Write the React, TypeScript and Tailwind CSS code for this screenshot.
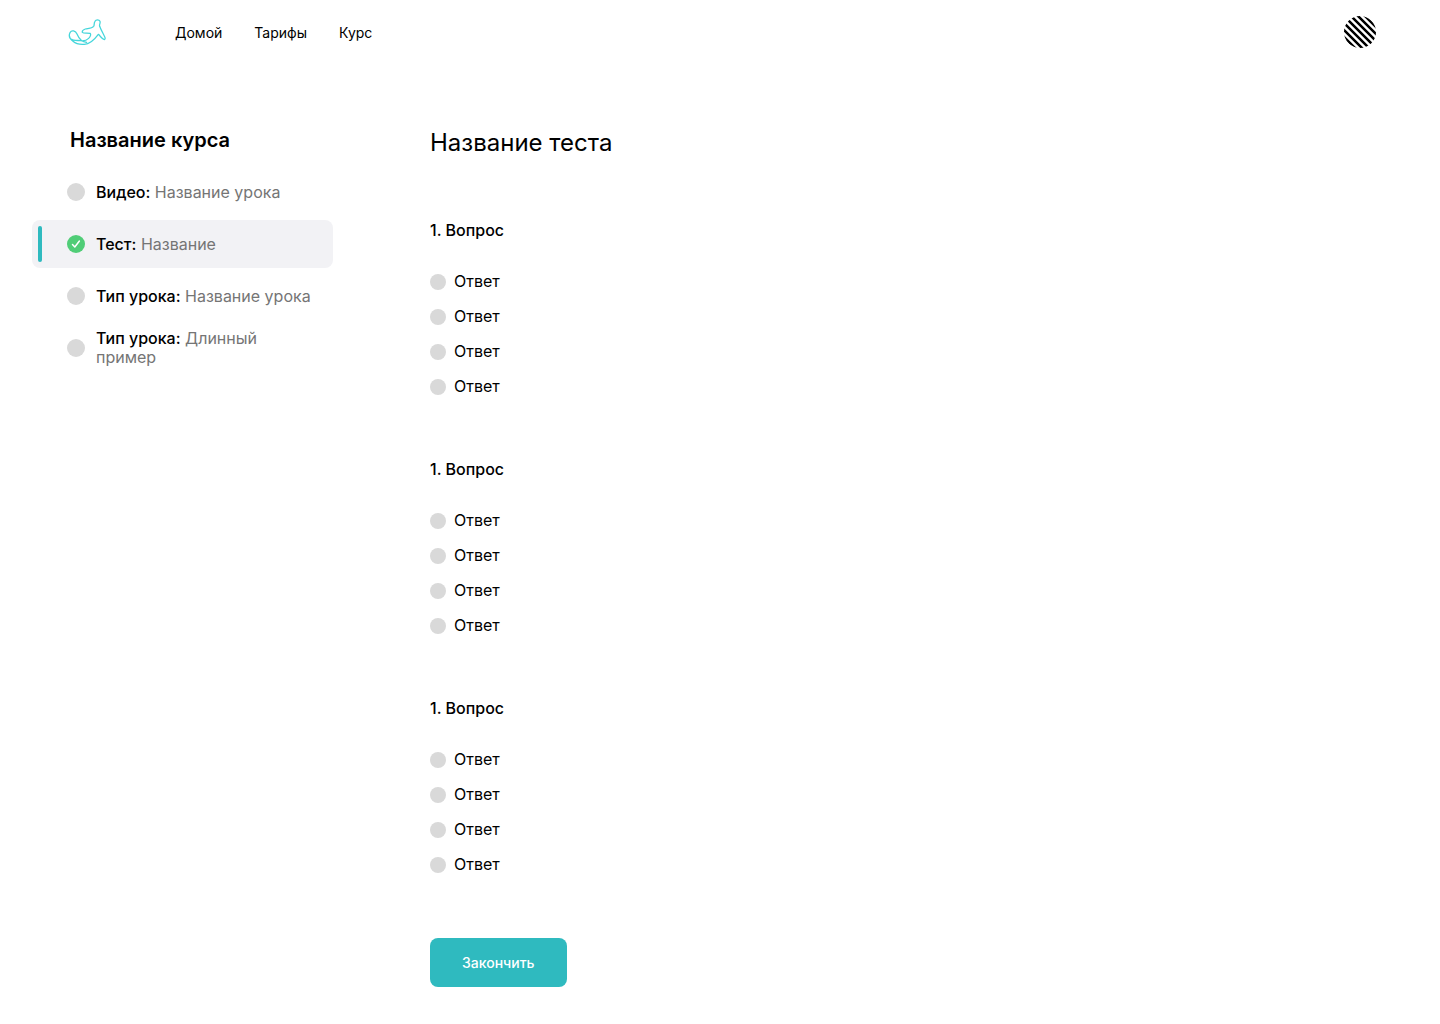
import React from "react";

type Lesson = { kind: string; title: string; active?: boolean };

const lessons: Lesson[] = [
  { kind: "Видео:", title: "Название урока" },
  { kind: "Тест:", title: "Название", active: true },
  { kind: "Тип урока:", title: "Название урока" },
  { kind: "Тип урока:", title: "Длинный пример" },
];

const questions = ["q1", "q2", "q3"];
const answers = ["a1", "a2", "a3", "a4"];

function Logo() {
  return (
    <svg
      viewBox="24 24 117 84"
      className="h-7 w-[39px]"
      fill="none"
      stroke="#45d6db"
      strokeWidth="3.8"
      strokeLinejoin="round"
      strokeLinecap="round"
      aria-hidden="true"
    >
      <path d="M80 97C64 96 56 84 51 72C47 62 35 59 30 68C25 78 31 88 39 94C47 101 60 104 73 103C92 102 104 88 115 73C121 78 126 87 133 89C136 88 136 84 134 80C129 70 123 60 119 49C117 43 122 40 120 34C117 28 108 28 105 34C101 39 104 45 101 49C96 55 84 55 76 57C70 59 66 63 67 67C71 71 82 68 90 70C94 73 91 80 86 85C79 92 70 93 62 92C50 91 40 92 35 88" />
    </svg>
  );
}

function Avatar() {
  return (
    <svg viewBox="0 0 32 32" className="size-8" aria-hidden="true">
      <defs>
        <clipPath id="avatar-circle">
          <circle cx="16" cy="16" r="16" />
        </clipPath>
      </defs>
      <g clipPath="url(#avatar-circle)" stroke="#000" strokeWidth="2.5">
        <path d="M-25 -4L15 36M-18 -4L22 36M-11 -4L29 36M-4 -4L36 36M3 -4L43 36M10 -4L50 36M17 -4L57 36" />
      </g>
    </svg>
  );
}

function LessonLink({ kind, title, active }: Lesson) {
  return (
    <a
      href="#lesson"
      aria-current={active ? "page" : undefined}
      className={
        active
          ? "flex h-12 items-center rounded-lg bg-[#f2f2f5] py-1.5 pr-4 pl-1.5"
          : "flex h-12 items-center py-1.5 pr-4 pl-1.5"
      }
    >
      <span className={active ? "h-9 w-1 rounded-xs bg-[#2fbabf]" : "h-9 w-1"} />
      {active ? (
        <svg viewBox="0 0 18 18" className="ml-[25px] size-[18px] shrink-0" aria-hidden="true">
          <circle cx="9" cy="9" r="9" fill="#50cd77" />
          <path
            d="M5.5 9.6L7.8 12L12.4 6"
            fill="none"
            stroke="#fff"
            strokeWidth="1.5"
            strokeLinecap="round"
            strokeLinejoin="round"
          />
        </svg>
      ) : (
        <span className="ml-[25px] size-[18px] shrink-0 rounded-full bg-[#d9d9d9]" />
      )}
      <span className="ml-[11px] max-w-[216px] text-base leading-[19px] text-[#757575]">
        <span className="font-medium text-black">{kind}</span> {title}
      </span>
    </a>
  );
}

export default function App() {
  return (
    <div className="min-h-screen bg-white font-['Inter',sans-serif] text-black">
      <header className="flex h-16 items-center justify-between px-16">
        <div className="flex items-center">
          <a href="#home" aria-label="Главная" className="ml-1">
            <Logo />
          </a>
          <nav className="ml-[68px] flex gap-8 text-sm leading-[17px]">
            <a href="#home">Домой</a>
            <a href="#plans">Тарифы</a>
            <a href="#course">Курс</a>
          </nav>
        </div>
        <button type="button" aria-label="Профиль">
          <Avatar />
        </button>
      </header>

      <div className="flex items-start gap-[97px] px-8 pt-16 pb-9">
        <aside className="w-[301px] shrink-0">
          <h2 className="mb-4 pl-[38px] text-xl leading-6 font-semibold">Название курса</h2>
          <nav className="flex flex-col gap-1">
            {lessons.map((lesson, i) => (
              <LessonLink key={i} {...lesson} />
            ))}
          </nav>
        </aside>

        <main className="flex-1">
          <form className="flex flex-col items-start gap-16">
            <h1 className="text-2xl leading-[29px]">Название теста</h1>
            {questions.map((q) => (
              <fieldset key={q}>
                <legend className="mb-8 text-base leading-[19px] font-medium">1. Вопрос</legend>
                <div className="flex flex-col gap-4">
                  {answers.map((a) => (
                    <label key={a} className="flex items-center gap-2 text-base leading-[19px]">
                      <input
                        type="radio"
                        name={q}
                        value={a}
                        className="size-4 appearance-none rounded-full bg-[#d9d9d9] checked:bg-[#2fbabf]"
                      />
                      Ответ
                    </label>
                  ))}
                </div>
              </fieldset>
            ))}
            <button
              type="button"
              className="rounded-lg bg-[#2fbabf] px-8 py-4 text-sm leading-[17px] font-medium text-white"
            >
              Закончить
            </button>
          </form>
        </main>
      </div>
    </div>
  );
}
